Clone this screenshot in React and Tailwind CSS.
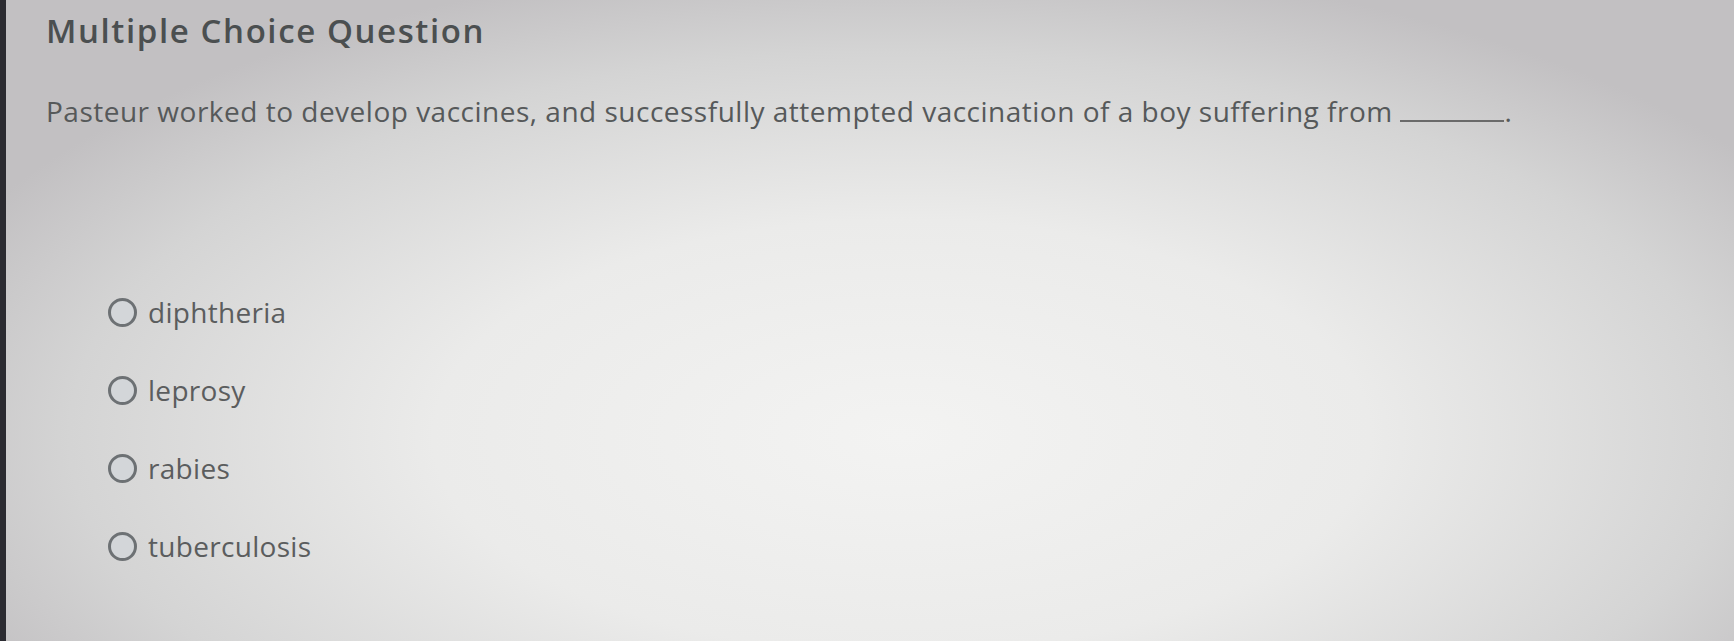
import React from "react";

const options = ["diphtheria", "leprosy", "rabies", "tuberculosis"];

export default function App() {
  return (
    <div className="flex h-[641px] w-[1734px] overflow-hidden bg-[radial-gradient(ellipse_60%_75%_at_52%_68%,#f3f3f2_0%,#ebebea_45%,#d4d4d4_80%,#c2c0c2_100%)] font-['Open_Sans','Liberation_Sans',sans-serif]">
      <div className="w-[6px] shrink-0 bg-[#2b2b31]" />
      <div className="flex flex-col pl-[40px] pt-[10px]">
        <h1 className="text-[33px] font-semibold leading-[42px] tracking-[1.6px] text-[#4b4f50]">
          Multiple Choice Question
        </h1>
        <p className="mt-[43px] text-[28px] font-medium leading-[32px] tracking-[0.5px] text-[#56595a]">
          Pasteur worked to develop vaccines, and successfully attempted vaccination of a boy suffering from{" "}
          <span className="inline-block w-[104px] border-b-2 border-[#6a6a6a] align-baseline" />.
        </p>
        <ul className="mt-[169px] flex flex-col gap-[46px] pl-[62px]">
          {options.map((opt) => (
            <li key={opt} className="flex items-center gap-[11px]">
              <span className="h-[29px] w-[29px] shrink-0 rounded-full border-[3.5px] border-[#6d7174] bg-[#d3d6d9]" />
              <span className="text-[28px] font-medium leading-[32px] tracking-[0.3px] text-[#5b5d5e]">{opt}</span>
            </li>
          ))}
        </ul>
      </div>
    </div>
  );
}
